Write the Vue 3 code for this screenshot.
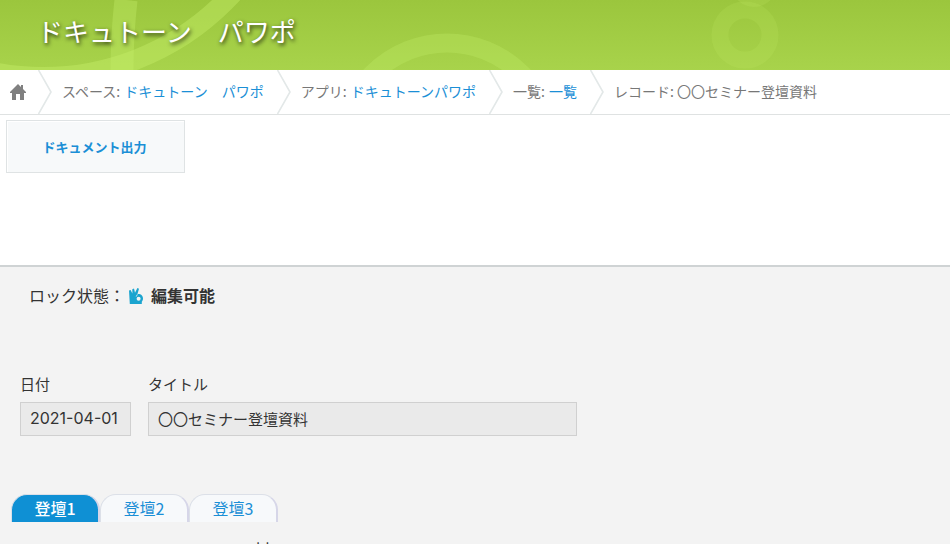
<template>
  <div class="page">
    <header class="space-header">
      <svg class="header-art" width="950" height="70" viewBox="0 0 950 70" aria-hidden="true">
        <g fill="none" stroke="#c6ef6a">
          <circle cx="43" cy="-180" r="257" stroke-width="20" opacity="0.42" />
          <path d="M126 0Q122 35 122 70" stroke-width="23" opacity="0.36" />
          <circle cx="447" cy="148" r="105" stroke-width="19" opacity="0.28" />
          <circle cx="745" cy="35" r="25" stroke-width="17" opacity="0.15" />
          <circle cx="754" cy="-16" r="16" stroke-width="14" opacity="0.16" />
        </g>
      </svg>
      <h1 class="space-title">ドキュトーン　パワポ</h1>
    </header>

    <nav class="breadcrumb" aria-label="パンくず">
      <a class="home" href="#" aria-label="ホーム">
        <svg width="16" height="16" viewBox="0 0 16 16" fill="#808080">
          <path d="M8 0L0 8v1h2v7h4v-6h4v6h4V9h2V8l-3-3V1h-2v2z" />
        </svg>
      </a>
      <template v-for="crumb in crumbs" :key="crumb.label">
        <svg class="chevron" width="14" height="44" viewBox="0 0 14 44" aria-hidden="true">
          <path d="M0.5 0L13 22L0.5 44" fill="none" stroke="#e3e8e8" stroke-width="1.6" />
        </svg>
        <span class="crumb">
          {{ crumb.label }}: <a v-if="crumb.link" href="#">{{ crumb.name }}</a>
          <template v-else>{{ crumb.name }}</template>
        </span>
      </template>
    </nav>

    <div class="action-area">
      <button type="button" class="output-button">ドキュメント出力</button>
    </div>

    <main class="record">
      <div class="lock-status">
        <span>ロック状態：</span>
        <svg class="hand" width="14" height="16" viewBox="0 0 14 16" aria-hidden="true">
          <path
            d="M0 2.6L1.6 2 3.4 5.6 3.3 1.2 5 .6 6 4.8 8.4 0 10 .8 8.4 6.2C10 5.4 14 6.6 14 10.5c0 2-.8 2.6-1.2 3.2V16H.8z"
            fill="#1ba4cf"
          />
          <path d="M8.4 6.4L7.2 8.6" stroke="#f3f3f3" stroke-width="0.8" />
          <circle cx="9.6" cy="10.8" r="2" fill="#f3f3f3" />
        </svg>
        <strong>編集可能</strong>
      </div>

      <div class="fields">
        <div class="field field-date">
          <label for="date">日付</label>
          <input id="date" type="text" :value="record.date" readonly />
        </div>
        <div class="field field-title">
          <label for="title">タイトル</label>
          <input id="title" type="text" :value="record.title" readonly />
        </div>
      </div>

      <div class="tabs" role="tablist">
        <button
          v-for="(tab, index) in tabs"
          :key="tab"
          type="button"
          role="tab"
          class="tab"
          :class="{ active: activeTab === index }"
          :aria-selected="activeTab === index"
          @click="activeTab = index"
        >
          {{ tab }}
        </button>
      </div>
      <div class="tab-panel">対</div>
    </main>
  </div>
</template>

<script setup>
import { ref } from 'vue'

const crumbs = [
  { label: 'スペース', name: 'ドキュトーン　パワポ', link: true },
  { label: 'アプリ', name: 'ドキュトーンパワポ', link: true },
  { label: '一覧', name: '一覧', link: true },
  { label: 'レコード', name: '〇〇セミナー登壇資料', link: false }
]

const record = { date: '2021-04-01', title: '〇〇セミナー登壇資料' }

const tabs = ['登壇1', '登壇2', '登壇3']
const activeTab = ref(0)
</script>

<style>
body {
  margin: 0;
}
</style>

<style scoped>
.page {
  display: flex;
  flex-direction: column;
  height: 100vh;
  overflow: hidden;
  box-sizing: border-box;
  background: #fff;
  color: #333;
  font-family: "Noto Sans CJK JP", sans-serif;
}

.page * {
  box-sizing: border-box;
}

a {
  color: #1b8fd6;
  text-decoration: none;
}

.space-header {
  position: relative;
  flex: none;
  height: 70px;
  overflow: hidden;
  background: linear-gradient(#9bc63d, #a8d34b);
}

.header-art {
  position: absolute;
  top: 0;
  left: 0;
}

.space-title {
  position: relative;
  margin: 0;
  padding: 12px 37px;
  color: #fff;
  font-size: 26px;
  font-weight: 400;
  line-height: 38px;
  text-shadow: 1px 2px 4px rgba(0, 0, 0, 0.8);
}

.breadcrumb {
  display: flex;
  align-items: center;
  flex: none;
  height: 45px;
  border-bottom: 1px solid #dfe2e2;
  color: #777;
  font-size: 14px;
  line-height: 20px;
  white-space: nowrap;
}

.home {
  display: flex;
  padding: 0 12px 0 10px;
}

.chevron {
  flex: none;
}

.crumb {
  padding: 0 13px 2px 10px;
}

.crumb a {
  margin-left: 1px;
}

.action-area {
  flex: none;
  height: 150px;
  padding: 5px 6px;
}

.output-button {
  min-width: 179px;
  height: 53px;
  padding: 0 18px 0 16px;
  border: 1px solid #dfe3e4;
  background: #f7f9fa;
  box-shadow: inset 1px 1px 0 #fff;
  color: #1b8fd6;
  font-family: inherit;
  font-size: 13px;
  font-weight: 700;
  cursor: pointer;
}

.record {
  flex: 1;
  border-top: 2px solid #cfd3d4;
  background: #f3f3f3;
}

.lock-status {
  display: flex;
  align-items: center;
  padding: 16px 29px;
  font-size: 16px;
  line-height: 24px;
}

.hand {
  margin: 2px 8px 0 4px;
}

.fields {
  display: flex;
  gap: 17px;
  padding: 49px 20px 0;
}

.field {
  display: flex;
  flex-direction: column;
  gap: 6px;
}

.field label {
  font-size: 15px;
  line-height: 24px;
}

.field input {
  width: 100%;
  height: 34px;
  padding: 0 9px 2px;
  border: 1px solid #d0d0d0;
  background: #eaeaea;
  color: #333;
  font-family: inherit;
  font-size: 15px;
  outline: none;
}

.field-date {
  width: 111px;
}

.field-date input {
  font-family: Inter, sans-serif;
  font-size: 16px;
}

.field-title {
  width: 429px;
}

.tabs {
  display: flex;
  padding: 58px 11px 0;
}

.tab {
  width: 89px;
  height: 28px;
  padding: 0 0 2px;
  border: 1px solid #dce0e8;
  border-right: 2px solid #d6d6e8;
  border-bottom: none;
  border-radius: 16px 16px 0 0;
  background: #f7f9fb;
  color: #1b8fd6;
  font-family: inherit;
  font-size: 16px;
  line-height: 24px;
  cursor: pointer;
}

.tab.active {
  background: #0f90d4;
  color: #fff;
  font-weight: 500;
}

.tab-panel {
  padding: 16px 0 0 253px;
  font-size: 18px;
  line-height: 24px;
}
</style>
